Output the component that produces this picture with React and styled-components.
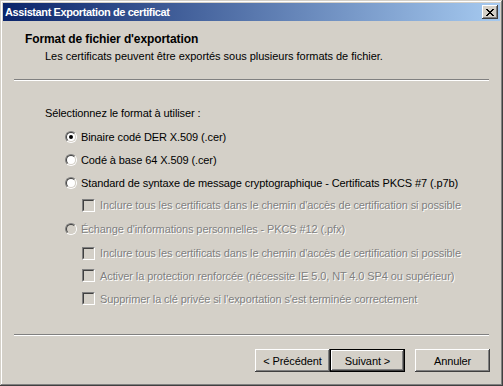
import React from "react";
import styled, { createGlobalStyle, css } from "styled-components";

const Global = createGlobalStyle`
  html, body { margin: 0; padding: 0; background: #d4d0c8; }
  body { font-family: "Liberation Sans", Arial, sans-serif; font-size: 11px; letter-spacing: -0.1px; }
`;

const FACE = "#d4d0c8";

const Window = styled.div`
  width: 503px;
  height: 386px;
  box-sizing: border-box;
  padding: 3px;
  background: ${FACE};
  box-shadow: inset -1px -1px #404040, inset 1px 1px ${FACE},
    inset -2px -2px #808080, inset 2px 2px #ffffff;
  display: flex;
  flex-direction: column;
`;

const TitleBar = styled.div`
  height: 18px;
  display: flex;
  align-items: center;
  justify-content: space-between;
  padding: 0 2px 0 2px;
  background: linear-gradient(to right, #0a246a, #a6caf0);
  color: #fff;
  font-weight: bold;
  font-size: 11px;
  letter-spacing: -0.4px;
`;

const raised = css`
  background: ${FACE};
  box-shadow: inset -1px -1px #404040, inset 1px 1px #ffffff,
    inset -2px -2px #808080, inset 2px 2px ${FACE};
`;

const CloseButton = styled.div`
  width: 16px;
  height: 14px;
  ${raised};
  display: flex;
  align-items: center;
  justify-content: center;
`;

const Header = styled.div`
  height: 58px;
  box-sizing: border-box;
  padding: 11px 0 0 22px;
`;

const HeaderTitle = styled.div`
  font-weight: bold;
  font-size: 12px;
  line-height: 15px;
  color: #000;
`;

const HeaderSub = styled.div`
  padding-left: 20px;
  margin-top: 2px;
  line-height: 14px;
  color: #000;
  letter-spacing: -0.03px;
`;

const Separator = styled.div`
  margin: 0 11px;
  border-top: 1px solid #808080;
  border-bottom: 1px solid #ffffff;
  height: 0;
`;

const Body = styled.div`
  flex: 1;
  padding: 25px 0 0 42px;
  display: flex;
  flex-direction: column;
`;

const Prompt = styled.div`
  line-height: 14px;
  margin-bottom: 5px;
`;

const Row = styled.div`
  display: flex;
  align-items: center;
  height: ${(p) => p.$h || 23}px;
  padding-left: ${(p) => (p.$indent ? 37 : 20)}px;
  gap: ${(p) => (p.$indent ? 5 : 4)}px;
  color: ${(p) => (p.$disabled ? "#808080" : "#000")};
  text-shadow: ${(p) => (p.$disabled ? "1px 1px #ffffff" : "none")};
  white-space: nowrap;
`;

const RadioOuter = styled.span`
  width: 12px;
  height: 12px;
  box-sizing: border-box;
  border-radius: 50%;
  border: 1px solid;
  border-color: #808080 #ffffff #ffffff #808080;
  display: flex;
  flex: none;
`;

const RadioInner = styled.span`
  flex: 1;
  border-radius: 50%;
  border: 1px solid;
  border-color: #404040 ${FACE} ${FACE} #404040;
  background: ${(p) => (p.$disabled ? FACE : "#fff")};
  display: flex;
  align-items: center;
  justify-content: center;
`;

const Dot = styled.span`
  width: 4px;
  height: 4px;
  border-radius: 50%;
  background: #000;
`;

const CheckOuter = styled.span`
  width: 13px;
  height: 13px;
  box-sizing: border-box;
  flex: none;
  border: 1px solid;
  border-color: #808080 #ffffff #ffffff #808080;
  display: flex;
`;

const CheckInner = styled.span`
  flex: 1;
  border: 1px solid;
  border-color: #404040 ${FACE} ${FACE} #404040;
  background: ${(p) => (p.$disabled ? FACE : "#fff")};
`;

const Footer = styled.div`
  height: 47px;
  box-sizing: border-box;
  display: flex;
  justify-content: flex-end;
  align-items: flex-start;
  padding: 13px 10px 0 0;
`;

const Button = styled.div`
  width: 75px;
  height: 23px;
  box-sizing: border-box;
  ${raised};
  display: flex;
  align-items: center;
  justify-content: center;
  color: #000;
  margin-left: ${(p) => p.$ml || 0}px;
  ${(p) =>
    p.$default &&
    css`
      box-shadow: inset 0 0 0 1px #000, inset -2px -2px #404040,
        inset 2px 2px #ffffff, inset -3px -3px #808080, inset 3px 3px ${FACE};
    `}
`;

const Radio = ({ checked, disabled }) => (
  <RadioOuter>
    <RadioInner $disabled={disabled}>{checked && <Dot />}</RadioInner>
  </RadioOuter>
);

const Check = ({ disabled }) => (
  <CheckOuter>
    <CheckInner $disabled={disabled} />
  </CheckOuter>
);

export default function App() {
  return (
    <>
      <Global />
      <Window>
        <TitleBar>
          <span>Assistant Exportation de certificat</span>
          <CloseButton>
            <svg width="8" height="7" viewBox="0 0 8 7" shapeRendering="crispEdges">
              <path
                d="M0 0h2v1h1v1h2v-1h1v-1h2v1h-1v1h-1v1h-1v1h1v1h1v1h1v1h-2v-1h-1v-1h-2v1h-1v1h-2v-1h1v-1h1v-1h1v-1h-1v-1h-1v-1h-1z"
                fill="#000"
              />
            </svg>
          </CloseButton>
        </TitleBar>
        <Header>
          <HeaderTitle>Format de fichier d'exportation</HeaderTitle>
          <HeaderSub>
            Les certificats peuvent être exportés sous plusieurs formats de fichier.
          </HeaderSub>
        </Header>
        <Separator />
        <Body>
          <Prompt>Sélectionnez le format à utiliser :</Prompt>
          <Row>
            <Radio checked />
            <span>Binaire codé DER X.509 (.cer)</span>
          </Row>
          <Row>
            <Radio />
            <span>Codé à base 64 X.509 (.cer)</span>
          </Row>
          <Row>
            <Radio />
            <span>
              Standard de syntaxe de message cryptographique - Certificats PKCS #7 (.p7b)
            </span>
          </Row>
          <Row $indent $disabled $h={22}>
            <Check disabled />
            <span>Inclure tous les certificats dans le chemin d'accès de certification si possible</span>
          </Row>
          <Row $disabled $h={26}>
            <Radio disabled />
            <span>Échange d'informations personnelles - PKCS #12 (.pfx)</span>
          </Row>
          <Row $indent $disabled $h={22}>
            <Check disabled />
            <span>Inclure tous les certificats dans le chemin d'accès de certification si possible</span>
          </Row>
          <Row $indent $disabled>
            <Check disabled />
            <span>Activer la protection renforcée (nécessite IE 5.0, NT 4.0 SP4 ou supérieur)</span>
          </Row>
          <Row $indent $disabled>
            <Check disabled />
            <span>Supprimer la clé privée si l'exportation s'est terminée correctement</span>
          </Row>
        </Body>
        <Separator />
        <Footer>
          <Button>&lt; Précédent</Button>
          <Button $default>Suivant &gt;</Button>
          <Button $ml={10}>Annuler</Button>
        </Footer>
      </Window>
    </>
  );
}
